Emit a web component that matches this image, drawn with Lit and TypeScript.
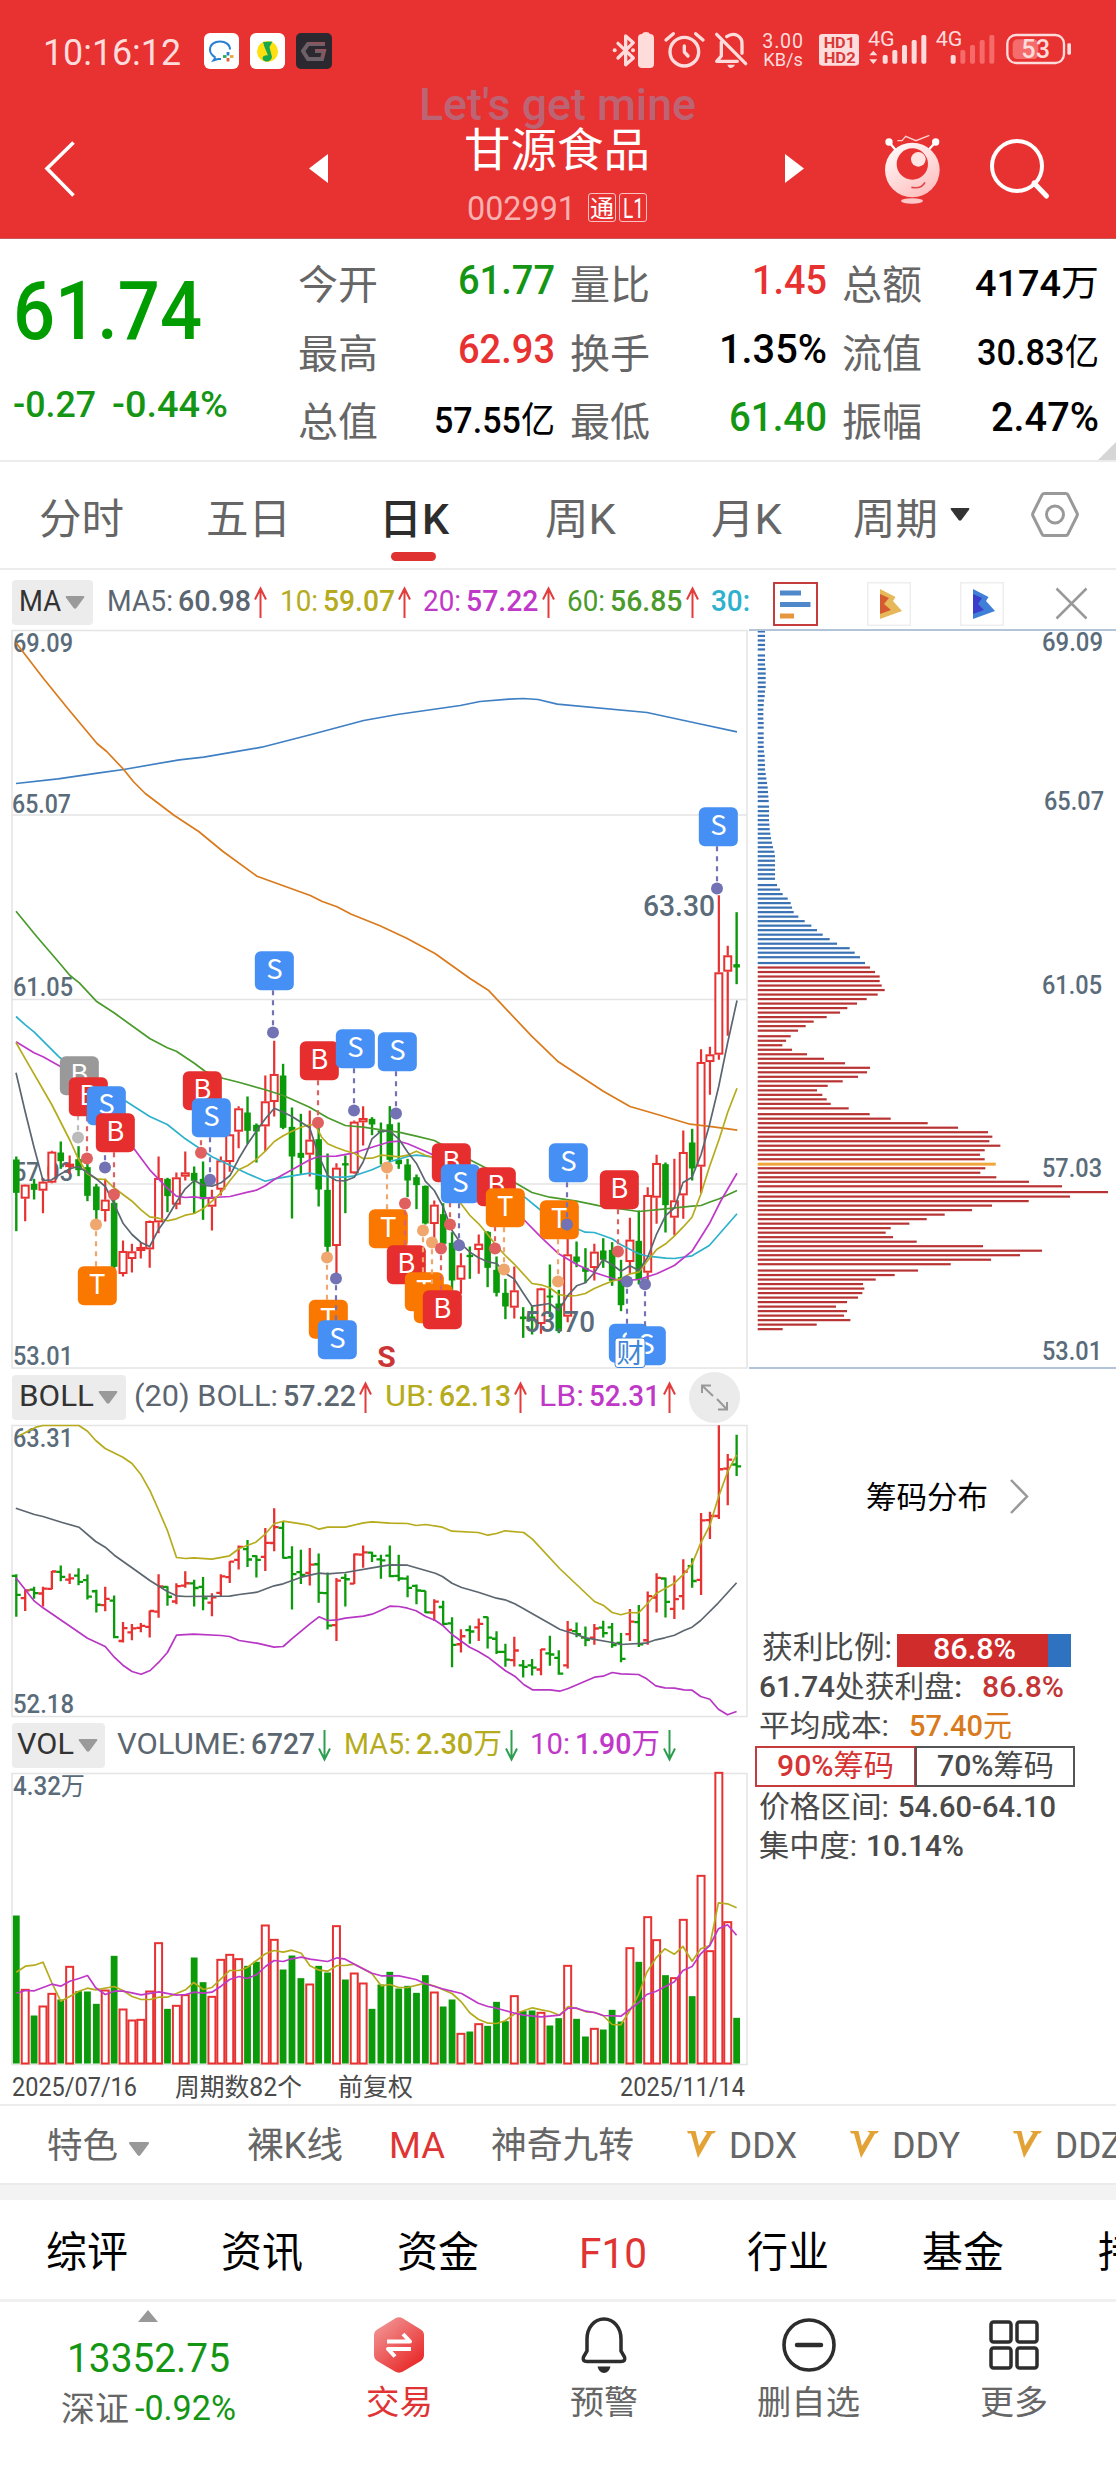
import { LitElement, html, svg, css } from "lit";
import { customElement } from "lit/decorators.js";

const UP = "#e83131";
const DOWN = "#0a9a0a";

/* Chart geometry: one slot per trading day, vertical unit is a third of a pixel from BASE_Y. */
const BASE_Y = 960;
const slot = (i: number) => 16.3 + 8.893 * i;
const py = (v: number) => BASE_Y + v / 3;

/* direction, high, body top, body bottom, low */
const DAYS: [string, number, number, number, number][] = [
  ["g",588,597,697,812],["r",672,673,714,782],["g",655,670,688,717],["r",655,664,690,758],["r",571,574,666,668],
  ["g",543,576,602,625],["r",585,610,617,640],["g",557,596,629,647],["g",590,620,706,722],["g",670,678,749,790],
  ["r",655,718,751,783],["g",700,727,919,925],["r",840,872,940,948],["r",850,873,895,936],["r",845,860,871,894],
  ["r",780,782,866,922],["r",588,653,785,818],["g",652,655,707,755],["r",636,651,732,746],["r",573,636,648,660],
  ["g",618,637,661,758],["g",603,655,716,778],["r",688,710,738,810],["r",588,600,687,705],["r",520,522,604,634],
  ["r",437,444,513,563],["g",408,456,511,550],["g",489,493,513,606],["r",345,423,497,572],["r",241,341,424,468],
  ["g",310,345,502,506],["g",441,499,588,774],["g",460,577,592,640],["r",450,538,582,648],["g",480,536,687,738],
  ["g",579,688,859,880],["r",608,622,856,940],["g",585,608,615,758],["r",480,484,638,640],["r",437,473,485,555],
  ["g",470,475,492,524],["g",486,510,516,612],["g",437,491,598,605],["g",486,597,611,625],["g",595,612,660,710],
  ["g",642,650,674,746],["g",675,676,789,792],["r",720,733,790,835],["g",728,761,850,860],["g",815,847,960,1078],
  ["r",878,915,957,1000],["g",858,883,890,955],["r",822,850,868,940],["g",812,814,922,980],["g",888,928,997,1008],
  ["g",955,997,1038,1076],["r",918,990,1041,1074],["g",1040,1068,1076,1132],["g",1035,1068,1080,1122],["r",982,984,1090,1120],
  ["g",912,1005,1011,1070],["g",988,1029,1112,1118],["r",835,882,1068,1085],["g",843,888,904,920],["g",863,922,934,968],
  ["r",850,874,922,960],["g",833,870,898,922],["g",845,868,961,976],["g",898,950,1034,1052],["r",772,838,904,940],
  ["g",750,841,957,972],["r",680,704,936,960],["r",583,608,711,790],["g",606,611,734,816],["r",595,720,771,824],
  ["r",510,575,704,775],["g",505,546,624,660],["r",266,305,618,698],["r",259,282,304,403],["r",-196,36,282,298],
  ["r",-44,-15,33,226],["g",-145,11,21,71],
];

const VOLUME = [615,838,915,888,850,867,769,842,843,880,840,736,897,930,928,843,698,895,886,854,741,815,859,748,733,746,766,754,645,688,777,735,803,822,766,786,647,807,789,819,895,822,784,834,826,847,794,846,888,867,970,963,941,946,874,932,857,902,900,907,945,923,766,925,978,955,957,898,933,713,754,620,689,794,803,628,857,496,722,187,635,922];

const MA_LINES: [string, number[]][] = [
  ["#3f7fc4",[48,-531,174,-545,298,-563,371,-573,538,-602,611,-610,785,-640,931,-677,1091,-720,1192,-738,1381,-765,1440,-777,1527,-784,1570,-786,1614,-783,1672,-769,1941,-744,2094,-711,2211,-686]],
  ["#d97a1c",[48,-953,131,-845,204,-755,291,-651,320,-627,371,-573,400,-537,436,-501,523,-435,596,-387,669,-327,771,-253,931,-195,967,-177,1011,-161,1054,-139,1140,-104,1220,-67,1305,-21,1410,54,1465,89,1595,227,1675,304,1810,392,1890,438,1970,461,2070,491,2140,499,2212,509]],
  ["#4a9a2c",[48,-148,112,-70,172,0,210,45,238,67,289,122,342,157,449,234,502,262,529,272,583,308,615,332,668,353,716,365,796,388,850,405,929,440,983,472,1036,495,1090,500,1143,508,1196,515,1249,527,1303,540,1418,602,1548,668,1596,696,1649,710,1730,722,1803,737,1916,753,1997,745,2076,737,2103,735,2128,725,2158,715,2211,690]],
  ["#2db1cc",[48,168,76,193,102,214,180,292,260,345,380,424,449,468,502,492,556,535,636,589,690,614,743,640,796,662,823,655,876,646,929,638,983,649,1036,650,1063,646,1116,628,1170,604,1223,588,1249,584,1303,590,1440,640,1574,710,1623,750,1738,808,1756,815,1783,816,1809,825,1836,835,1863,853,1916,880,1943,887,1997,893,2023,894,2076,886,2128,855,2211,760]],
  ["#c038c8",[48,244,102,277,129,289,180,317,260,370,350,490,400,562,449,628,502,683,529,707,556,711,583,709,609,713,690,708,743,695,769,689,796,676,823,657,876,628,929,598,956,588,1009,587,1063,577,1116,560,1170,544,1196,542,1223,550,1276,572,1303,585,1440,680,1574,780,1623,830,1676,880,1730,912,1783,936,1836,953,1863,961,1916,957,1970,940,2023,915,2076,872,2128,790,2163,720,2211,638]],
  ["#b5ab1c",[48,246,76,295,155,432,210,540,235,595,262,640,289,655,316,657,342,682,396,722,423,748,449,769,476,773,502,781,529,775,556,764,583,759,609,745,636,722,663,697,690,660,716,628,743,615,769,597,796,572,823,543,850,526,876,512,903,500,929,493,945,492,965,530,983,550,1009,561,1036,571,1063,578,1089,594,1116,593,1143,584,1170,586,1196,589,1223,584,1249,572,1276,584,1303,592,1350,680,1383,730,1410,765,1436,790,1463,822,1490,857,1516,885,1542,910,1596,969,1623,973,1649,982,1676,1002,1703,1007,1730,1005,1756,999,1783,984,1809,973,1836,962,1863,955,1890,940,1916,935,1943,900,1970,867,1997,850,2023,827,2049,800,2076,770,2103,700,2128,620,2158,535,2183,455,2211,383]],
  ["#5c6670",[48,337,76,455,102,560,129,660,155,658,183,640,210,625,235,618,262,636,289,655,316,678,342,730,369,788,396,822,423,846,449,858,476,806,502,770,529,725,556,685,583,660,609,674,636,677,663,667,690,645,716,595,743,550,769,512,796,475,823,443,850,455,876,468,903,485,929,502,956,585,983,645,1009,660,1036,661,1063,650,1089,605,1116,535,1143,512,1169,512,1196,535,1223,575,1249,608,1276,662,1303,690,1329,738,1356,810,1383,850,1410,875,1436,892,1463,904,1490,909,1516,938,1542,955,1569,997,1596,1037,1623,1033,1649,1029,1676,1050,1703,1005,1730,976,1756,967,1783,937,1809,897,1836,912,1863,932,1890,916,1916,930,1943,890,1970,820,1997,765,2023,743,2049,666,2076,650,2103,583,2128,495,2156,378,2183,246,2211,120]],
];

const BOLL_LINES: [string, number[]][] = [
  ["#b5ab1c",[40,226,75,200,90,195,165,195,183,212,200,240,220,264,257,290,276,309,295,343,314,392,332,450,350,510,369,591,388,594,405,592,443,596,480,586,500,564,535,545,555,520,573,490,592,482,630,490,648,495,667,506,685,500,722,500,760,487,778,484,815,488,852,489,870,495,890,492,925,500,945,512,1000,516,1020,524,1038,519,1056,511,1095,516,1113,536,1170,624,1243,723,1261,734,1280,756,1298,763,1316,756,1335,757,1352,732,1371,700,1410,668,1430,640,1447,610,1465,548,1484,495,1502,410,1521,335,1540,283]],
  ["#5c6670",[33,443,72,462,90,468,130,486,165,500,200,543,220,560,239,584,276,622,314,661,350,693,369,706,388,708,480,707,500,702,537,695,573,676,592,670,630,650,667,638,685,640,722,636,778,622,815,613,852,614,870,622,910,638,925,648,945,668,965,681,1000,695,1038,713,1056,718,1076,730,1095,745,1113,760,1150,790,1170,806,1225,832,1280,846,1298,852,1350,848,1371,838,1390,832,1410,824,1430,810,1447,800,1465,780,1502,727,1540,667]],
  ["#b836c4",[33,652,72,722,90,742,183,833,220,858,239,890,257,914,276,933,295,941,314,930,332,905,350,876,369,824,405,821,462,825,480,828,500,840,537,848,573,860,592,858,610,835,648,790,667,769,685,780,705,778,722,773,760,767,778,761,797,749,815,737,834,738,852,743,870,751,890,768,910,780,925,794,945,822,982,860,1000,873,1020,890,1056,930,1076,947,1095,972,1113,988,1150,988,1170,992,1188,984,1243,950,1261,947,1280,936,1298,940,1335,942,1352,955,1371,976,1390,982,1410,983,1430,988,1447,989,1465,1008,1484,1016,1502,1046,1521,1063,1540,1053]],
];

const VOL_LINES: [string, number[]][] = [
  ["#b5ab1c",[34,785,53,767,72,764,90,755,108,816,127,872,146,858,165,842,183,833,200,838,239,828,257,840,276,858,295,867,314,867,332,860,350,860,388,838,405,816,425,837,443,831,462,805,480,780,500,780,517,771,537,749,555,730,573,720,592,725,610,719,630,728,648,766,667,779,685,782,705,765,722,765,741,761,778,790,797,826,815,822,834,831,852,831,889,818,910,827,925,837,945,849,965,875,982,907,1000,926,1020,938,1038,939,1056,931,1076,910,1113,892,1132,898,1150,903,1170,914,1188,888,1206,894,1225,904,1243,906,1261,915,1280,942,1298,943,1316,902,1335,853,1352,786,1371,743,1390,715,1410,731,1428,708,1447,752,1465,715,1484,705,1502,577,1521,580,1540,592]],
  ["#c038c8",[34,848,53,840,72,841,108,821,127,827,146,812,165,804,183,795,200,832,220,852,239,842,257,842,276,847,295,853,332,844,369,854,388,852,405,845,425,848,443,845,462,827,480,807,500,798,517,804,537,792,555,768,573,750,592,753,610,745,630,740,648,746,685,753,705,742,722,746,741,761,778,788,797,796,834,796,870,807,889,820,925,835,965,849,1000,878,1020,888,1038,893,1076,908,1095,914,1132,919,1170,914,1188,893,1206,893,1225,902,1243,906,1261,915,1298,917,1335,877,1352,852,1371,843,1410,814,1428,780,1447,768,1465,730,1484,705,1502,655,1521,643,1540,674]],
];

/* kind, badge centre x/y, anchor dot x/y */
const MARKS: [string, number, number, number, number][] = [
  ["N",238,346,234,531],["B",265,409,261,594],["S",319,436,315,621],["B",346,517,342,702],["T",292,976,288,792],
  ["B",607,391,603,577],["S",634,472,630,658],["S",823,31,819,216],["B",958,301,954,487],["T",985,1076,981,891],
  ["S",1012,1138,1008,954],["S",1066,265,1062,450],["T",1165,805,1161,621],["S",1192,274,1188,459],["B",1219,913,1215,729],
  ["T",1273,994,1269,810],["T",1300,1030,1296,846],["B",1327,1048,1323,864],["B",1354,607,1350,792],["S",1381,670,1377,854],
  ["B",1489,679,1485,864],["T",1516,742,1512,927],["T",1678,778,1674,963],["S",1705,607,1701,792],["B",1858,688,1854,873],
  ["S",1885,1148,1881,963],["S",1939,1156,1935,971],["S",2155,-401,2151,-216],
];
const MARK_FILL: Record<string, string> = { N: "#999999", B: "#e62e2e", S: "#4690f5", T: "#fa7800" };
const MARK_DOT: Record<string, string> = { N: "#bbbbbb", B: "#e06060", S: "#7272b4", T: "#f0a76e" };

const CHIPS: [number, number[]][] = [
  [127,[75,75,75,75,75]],
  [173,[75,75,75,77,77,77,77,77,75,74,72,71,70,70,70,71,71]],
  [322,[71,71,71,71,72,74,74,75,75,77,79,81,83,84,85,86]],
  [462,[87,87,87,87,88,89,91,93,96,99,103,105,105,105,105,105,105]],
  [612,[111,120,128,143,152,156,161,175,194,214,231,248,269,291,329,344,360]],
  [761,[375,390,405,419,419,425,434,413,380,351,322,300,260,221,197,174]],
  [901,[152,138,127,156,201,252,315,390,381,354,308,263,231,247,260,272,326]],
  [1050,[389,452,563,654,744,757,748,781,734,720,734,767,736,721,769,867,966]],
  [1199,[1104,990,866,756,696,614,560,508,452,437,459,530,729,906,840,753,632]],
  [1349,[534,464,407,369,373,367,354,321,288,321,312,331,230,128]],
];

const points = (a: number[], kx: number, ky: number, oy: number) => {
  let s = "";
  for (let i = 0; i < a.length; i += 2) s += `${(a[i] * kx).toFixed(1)},${(oy + a[i + 1] * ky).toFixed(1)} `;
  return s;
};
const lines = (set: [string, number[]][], kx: number, ky: number, oy: number) =>
  set.map(([c, a]) => svg`<polyline points=${points(a, kx, ky, oy)} fill="none" stroke=${c} stroke-width="1.700" stroke-linejoin="round"/>`);

/* Text drawn at a fixed advance width; Han runs keep the regular weight. */
const runs = (text: string) =>
  text.split(/([\u4e00-\u9fff]+)/).filter((t) => t).map((t) => (/[\u4e00-\u9fff]/.test(t) ? svg`<tspan class="han">${t}</tspan>` : svg`<tspan>${t}</tspan>`));
const lab = (text: string, w: number, size: number, cls = "") => html`
  <svg class="lab ${cls}" width=${w} height=${size}><text x="0" y=${size * 0.87} font-size=${size} textLength=${w} lengthAdjust="spacingAndGlyphs">${runs(text)}</text></svg>`;
const tx = (text: string, x: number, y: number, w: number, size: number) =>
  svg`<text class="axis" x=${x} y=${y} font-size=${size} textLength=${w} lengthAdjust="spacingAndGlyphs">${runs(text)}</text>`;

const arrow = (up: boolean) => html`<svg class="arr ${up ? "" : "dn"}" width="13" height="31" viewBox="0 0 13 31">
  <path d="M6.5 31V2M1 12.5L6.5 1.5L12 12.5" fill="none" stroke=${up ? "#e23c3c" : "#2e9e50"} stroke-width="2"/></svg>`;
const caret = (c = "#9a9a9a", w = 20, h = 13) => html`<svg class="caret" width=${w} height=${h} viewBox="0 0 20 13"><path d="M1.5 0H18.5Q20 0 19 1.8L11.4 12Q10 13.6 8.6 12L1 1.8Q0 0 1.5 0Z" fill=${c}/></svg>`;

const base = css`
  :host, * { box-sizing: border-box; }
  svg { display: block; flex: none; overflow: visible; }
  text { font-family: Roboto, "Noto Sans CJK SC", sans-serif; fill: currentColor; }
  .row { display: flex; align-items: center; }
  .m text { font-weight: 500; }
  .han { font-weight: 400; }
  .red { color: #e03434; }
  .green { color: #149614; }
`;

@customElement("app-header")
class AppHeader extends LitElement {
  static styles = [base, css`
    :host { display: block; position: relative; height: 239px; background: #e83131; border-bottom: 1px solid #c45a5a; }
    .status { height: 82px; padding: 20px 0 0 43px; color: #ffdcdc; }
    .apps { display: flex; gap: 11px; margin-left: 23px; }
    .sys { margin-left: auto; }
    .bar { height: 156px; color: #fff; }
    .bar > svg { margin-top: 17px; }
    .back { margin-left: 45px; }
    .prev { margin-left: 234px; }
    .title { display: flex; flex-direction: column; align-items: center; width: 188px; margin: 0 134px 0 135px; padding-top: 30px; gap: 19px; }
    .code { gap: 3px; color: #fff; }
    .code .num { color: #f9b0b0; margin-right: 9px; }
    .tag { display: flex; align-items: center; justify-content: center; width: 28px; height: 29px; border: 1.5px solid #fbc0c0; border-radius: 3px; }
    .bot { margin-left: 80px; }
    .find { margin-left: 50px; }
    .mark { position: absolute; left: 419px; top: 81px; color: #bd6474; }
    .hd { fill: #d93838; }
  `];
  render() {
    const bars = (x: number, dim: boolean) => [0, 1, 2, 3, 4].map((i) =>
      svg`<rect x=${x + 29 * i} y=${105 - 15 * i} width="15" height=${26 + 15 * i} rx="5" fill=${dim && i ? "#f66a6a" : "#ffdcdc"}/>`);
    return html`
      <div class="row status">
        ${lab("10:16:12", 138, 37)}
        <div class="apps">
          <svg width="35" height="36" viewBox="0 0 35 36"><rect width="35" height="36" rx="6" fill="#fff"/><path d="M11.500 24.500C8 22.500 6 19.500 6 16.500C6 11.500 10.500 8.500 16 8.500C21.500 8.500 26 11.500 26 16.500M11.500 24.500L9.500 27.500L14 26H17" fill="none" stroke="#2a7fd0" stroke-width="2"/><path d="M24 19v3.500" stroke="#2a7fd0" stroke-width="2.800"/><path d="M26 23.500h3.500" stroke="#e6a63c" stroke-width="2.800"/><path d="M24 25v3.500" stroke="#e0603c" stroke-width="2.800"/><path d="M19 23.500h3.500" stroke="#2bab5c" stroke-width="2.800"/></svg>
          <svg width="35" height="36" viewBox="0 0 35 36"><rect width="35" height="36" rx="6" fill="#fff"/><circle cx="17.500" cy="18.500" r="10.500" fill="#ffdf10"/><path d="M13 9L22.500 8.500L19.500 14L22 24C21.500 27.500 18 29.500 14.500 28C11 26 12.500 21.500 18 22.500L14.500 14Z" fill="#15a850"/></svg>
          <svg width="36" height="36" viewBox="0 0 36 36"><rect width="36" height="36" rx="5" fill="#2c2830"/><path d="M29 11H12L7 18L12 26H26L28 18H19" fill="none" stroke="#6d6068" stroke-width="4"/><path d="M29 10H13M19 17H29L27 25" fill="none" stroke="#b04a50" stroke-width="1.200"/></svg>
        </div>
        <svg class="sys" width="516" height="62" viewBox="0 0 1548 186">
          <g fill="none" stroke="#ffdcdc" stroke-width="10" stroke-linecap="round" stroke-linejoin="round">
            <path d="M54 70L100 114L77 134V48L100 68L54 114"/>
            <circle cx="253" cy="95" r="43"/><path d="M253 78V96L264 108M198 60L220 41M309 60L287 41"/>
            <path d="M350 43L437 131M364 66V108L350 124H412M380 50C404 34 428 50 426 74V100"/>
            <rect x="1222" y="45" width="170" height="84" rx="26" stroke-width="7"/>
          </g>
          <g fill="#ffdcdc">
            <circle cx="44" cy="91" r="6"/><circle cx="99" cy="91" r="6"/>
            <path d="M126 42Q128 36 138 36Q148 36 150 42Q162 42 162 54V132Q162 144 150 144H126Q114 144 114 132V54Q114 42 126 42Z"/>
            <path d="M382 134H405Q400 144 393 144Q386 144 382 134Z"/>
            <rect x="657" y="42" width="120" height="95" rx="10"/>
            <path d="M820 92L832 106H808ZM820 132L832 118H808Z"/>
            <rect x="1402" y="70" width="11" height="34" rx="4"/>
            <text x="487" y="85" font-size="59" textLength="122">3.00</text>
            <text x="490" y="137" font-size="53" textLength="119" lengthAdjust="spacingAndGlyphs">KB/s</text>
            <text x="804" y="79" font-size="60" textLength="80" lengthAdjust="spacingAndGlyphs">4G</text>
            <text x="1007" y="79" font-size="60" textLength="80" lengthAdjust="spacingAndGlyphs">4G</text>
          </g>
          <g font-weight="700"><text class="hd" x="671" y="85" font-size="44" textLength="94" lengthAdjust="spacingAndGlyphs">HD1</text><text class="hd" x="671" y="128" font-size="44" textLength="96" lengthAdjust="spacingAndGlyphs">HD2</text></g>
          ${bars(848, false)}${bars(1052, true)}
          <rect x="1238" y="58" width="77" height="59" rx="14" fill="#f56c6c"/>
          <text x="1264" y="114" font-size="76" font-weight="500" textLength="86" lengthAdjust="spacingAndGlyphs">53</text>
        </svg>
      </div>
      <div class="row bar">
        <svg class="back" width="30" height="56" viewBox="0 0 30 56"><path d="M28.500 1.500L2 27.500L28.500 54.500" fill="none" stroke="#fff" stroke-width="3.600"/></svg>
        <svg class="prev" width="19" height="29" viewBox="0 0 19 29"><path d="M0 14.500L19 0V29Z" fill="#fff"/></svg>
        <div class="title">
          ${lab("甘源食品", 186, 46)}
          <div class="row code"><div class="num">${lab("002991", 109, 33)}</div><span class="tag">${lab("通", 24, 24)}</span><span class="tag">${lab("L1", 21, 28)}</span></div>
        </div>
        <svg class="next" width="19" height="29" viewBox="0 0 19 29"><path d="M19 14.500L0 0V29Z" fill="#fff"/></svg>
        <svg class="bot" width="56" height="70" viewBox="850 340 168 210">
          <defs><linearGradient id="h" x1="0" y1="0" x2=".6" y2="1"><stop offset="0" stop-color="#fff"/><stop offset="1" stop-color="#ffc2c2"/></linearGradient></defs>
          <path d="M865 364L890 394M1005 364L978 394" stroke="#fff" stroke-width="7"/><circle cx="865" cy="364" r="11" fill="#fff"/><circle cx="1005" cy="364" r="11" fill="#fff"/>
          <path d="M890 360H904L915 347L946 360L986 344" fill="none" stroke="#ffd0d0" stroke-width="4"/>
          <circle cx="935" cy="448" r="82" fill="url(#h)"/><circle cx="935" cy="430" r="47" fill="#e83131"/><circle cx="953" cy="416" r="22" fill="#ffe4e4"/>
          <path d="M932 500Q962 506 973 485" fill="none" stroke="#e04848" stroke-width="5"/><ellipse cx="934" cy="541" rx="33" ry="8" fill="#ffc8c8"/>
        </svg>
        <svg class="find" width="60" height="60" viewBox="0 0 60 60"><circle cx="27" cy="27" r="25" fill="none" stroke="#fff" stroke-width="4"/><path d="M44 44L56.500 57" stroke="#fff" stroke-width="5" stroke-linecap="round"/></svg>
      </div>
      <div class="mark">${lab("Let's get mine", 277, 45, "m")}</div>`;
  }
}

@customElement("quote-board")
class QuoteBoard extends LitElement {
  static styles = [base, css`
    :host { display: flex; position: relative; height: 223px; border-bottom: 2px solid #ececec; background: #fff; }
    .price { width: 298px; padding: 30px 0 0 13px; color: #009c00; }
    .chg { gap: 16px; margin-top: 35px; color: #149614; }
    .grid { display: grid; grid-template-columns: repeat(3, 257px); column-gap: 15px; grid-auto-rows: 68.500px; padding-top: 11px; }
    .cell { display: flex; align-items: center; justify-content: space-between; color: #666; }
    .k { color: #000; margin-bottom: 10px; }
    .c { color: #000; margin-bottom: 2px; }
    .up { color: #e83131; }
    .down { color: #149614; }
    .fold { position: absolute; right: 0; bottom: 0; }
  `];
  cells: [string, string, number, string][] = [
    ["今开", "61.77", 97, "k down"], ["量比", "1.45", 75, "k up"], ["总额", "4174万", 124, "c"],
    ["最高", "62.93", 97, "k up"], ["换手", "1.35%", 108, "k"], ["流值", "30.83亿", 122, "c"],
    ["总值", "57.55亿", 121, "c"], ["最低", "61.40", 98, "k down"], ["振幅", "2.47%", 108, "k"],
  ];
  render() {
    return html`
      <div class="price">${lab("61.74", 189, 81, "m")}<div class="row chg">${lab("-0.27", 83, 37, "m")}${lab("-0.44%", 116, 37, "m")}</div></div>
      <div class="grid">${this.cells.map(([n, v, w, c]) => html`<div class="cell">${lab(n, 80, 40)}<span class=${c}>${lab(v, w, c === "c" ? 36 : 40, "m")}</span></div>`)}</div>
      <svg class="fold" width="18" height="18" viewBox="0 0 18 18"><path d="M18 0V18H0Z" fill="#d6d6d6"/></svg>`;
  }
}

@customElement("period-tabs")
class PeriodTabs extends LitElement {
  static styles = [base, css`
    :host { display: flex; align-items: center; height: 108px; padding: 6px 0 0 39px; border-bottom: 2px solid #ececec; color: #666; }
    .t1 { margin-left: 82px; } .t2 { margin-left: 88px; } .t3 { margin-left: 96px; } .t5 { margin-left: 95px; } .t4 { margin-left: 71px; }
    .on { position: relative; color: #2d2d2d; }
    .on .lab text { font-weight: 500; }
    .on .han { font-weight: 500; }
    .on::after { content: ""; position: absolute; left: 12px; top: 55px; width: 45px; height: 9px; border-radius: 5px; background: #e03131; }
    .caret { margin-left: 10px; margin-top: -8px; }
    .set { margin-left: 59px; margin-top: -7px; }
  `];
  render() {
    return html`
      <span>${lab("分时", 85, 42)}</span><span class="t1">${lab("五日", 85, 42)}</span><span class="t2 on">${lab("日K", 70, 42)}</span>
      <span class="t3">${lab("周K", 71, 42)}</span><span class="t5">${lab("月K", 71, 42)}</span><span class="t4">${lab("周期", 85, 42)}</span>
      ${caret("#333", 24, 13)}
      <svg class="set" width="48" height="45" viewBox="0 0 48 45"><path d="M13 1.500H35Q36.500 1.500 37 3L46 21Q46.800 22.500 46 24L37 42Q36.500 43.500 35 43.500H13Q11.500 43.500 11 42L2 24Q1.200 22.500 2 21L11 3Q11.500 1.500 13 1.500Z" fill="none" stroke="#999" stroke-width="3"/><circle cx="24" cy="22.500" r="8.500" fill="none" stroke="#999" stroke-width="3"/></svg>`;
  }
}

@customElement("stock-charts")
class StockCharts extends LitElement {
  static styles = [base, css`
    :host { display: block; width: 750px; }
    .ind { display: flex; align-items: center; height: 56px; padding-left: 12px; }
    .ind.first { height: 60px; padding-top: 4px; }
    .chip { display: flex; align-items: center; gap: 4px; height: 45px; padding: 0 8px 0 7px; border-radius: 4px; background: #ececec; color: #333; margin-right: 14px; }
    .chip.b { margin-right: 8px; }
    .chip.v { margin-right: 12px; padding: 0 7px 0 5px; }
    .ind .lab { margin-bottom: 3px; }
    .arr { margin: 0 12.500px 0 3px; }
    .dn { transform: scaleY(-1); }
    .slate { color: #5c6670; } .olive { color: #b5ab1c; } .violet { color: #c038c8; } .leaf { color: #4a9a2c; } .cyan { color: #2db1cc; }
    .axis { fill: #5a6b7a; font-weight: 500; }
    .badge { font-family: "Noto Sans CJK SC", sans-serif; fill: #fff; }
    .sell { fill: #cc3535; font-weight: 700; }
    .cai { fill: #3f86d8; }
    .foot { display: flex; align-items: center; height: 40px; padding: 3px 5px 0 12px; color: #4a4a4a; }
    .foot .n { margin-left: 38px; } .foot .q { margin-left: 36px; } .foot .e { margin-left: auto; }
    .duo { display: flex; align-items: center; }
    .duo .gap { width: 5px; }
  `];
  /* Name with the thin face, figure with the heavier one. */
  pair(name: string, nw: number, value: string, vw: number, cls: string) {
    return html`<span class="duo ${cls}">${lab(name, nw, 29)}<i class="gap"></i>${lab(value, vw, 29, "m")}</span>`;
  }
  price() {
    return svg`
      <g stroke="#e4e4e4" stroke-width="1.500" fill="none"><rect x="12" y="630" width="735" height="737.500"/><path d="M12 814.500H747M12 999H747M12 1183.500H747"/></g>
      ${tx("69.09", 13, 651, 60, 25.5)}${tx("65.07", 12, 812, 59, 25.5)}${tx("61.05", 13, 995.5, 60, 25.5)}${tx("57.03", 13, 1180.5, 60, 25.5)}${tx("53.01", 13, 1364.5, 60, 25.5)}
      ${DAYS.map(([d, h, t, b, l], i) => {
        const x = slot(i), T = py(t), B = py(b);
        return d === "g"
          ? svg`<path d="M${x} ${py(h)}V${py(l)}" stroke=${DOWN} stroke-width="2.400"/><rect x=${x - 3.3} y=${T} width="6.600" height=${Math.max(2, B - T)} fill=${DOWN}/>`
          : svg`<path d="M${x} ${py(h)}V${T}M${x} ${B}V${py(l)}" stroke=${UP} stroke-width="2.200"/><rect x=${x - 3.5} y=${T + 0.8} width="7" height=${Math.max(1.5, B - T - 1.6)} fill="#fff" stroke=${UP} stroke-width="2"/>`;
      })}
      ${lines(MA_LINES, 1 / 3, 1 / 3, BASE_Y)}
      ${tx("63.30", 643, 915, 72, 29.5)}${tx("53.70", 524, 1331.5, 71, 29.5)}
      ${MARKS.map(([k, bx, by, dx, dy]) => {
        const X = bx / 3, Y = py(by), edge = Y + (by < dy ? 19.5 : -19.5);
        return svg`<path d="M${dx / 3} ${edge}V${py(dy)}" stroke=${MARK_DOT[k]} stroke-width="2.200" stroke-dasharray="5 5"/>
          <rect x=${X - 19.5} y=${Y - 19.5} width="39" height="39" rx="6" fill=${MARK_FILL[k]}/>
          <text class="badge" x=${X} y=${Y + 8.5} font-size="27.500" text-anchor="middle">${k === "N" ? "B" : k}</text>
          <circle cx=${dx / 3} cy=${py(dy)} r="6" fill=${MARK_DOT[k]}/>`;
      })}
      <text class="sell" x="386.500" y="1366.500" font-size="30" text-anchor="middle">S</text>
      <rect x="615" y="1337.500" width="30" height="29.500" rx="3" fill="#fff" stroke="#3f86d8" stroke-width="1"/>
      <text class="cai" x="630" y="1362" font-size="27" text-anchor="middle">财</text>`;
  }
  boll() {
    const by = (v: number) => 1425 + (63.31 - (53.01 + (1367.7 - py(v)) * 0.0218)) * 26.146;
    return svg`
      <rect x="12" y="1425" width="735" height="291" fill="none" stroke="#e4e4e4" stroke-width="1.500"/>
      ${tx("63.31", 13, 1446, 60, 25.5)}${tx("52.18", 13, 1712, 61, 25.5)}
      ${DAYS.map(([d, h, t, b, l], i) => {
        const x = slot(i), o = by(d === "g" ? t : b), c = by(d === "g" ? b : t);
        return svg`<path d="M${x} ${by(h)}V${by(l)}M${x - 4.5} ${o}H${x}M${x} ${c}H${x + 4.5}" stroke=${d === "g" ? DOWN : UP} stroke-width="2.300"/>`;
      })}
      ${lines(BOLL_LINES, 1 / 2.0907, 1 / 3, 1360)}`;
  }
  vol() {
    return svg`
      <rect x="12" y="1773" width="735" height="291" fill="none" stroke="#e4e4e4" stroke-width="1.500"/>
      ${tx("4.32万", 13, 1794.5, 72, 25.5)}
      ${VOLUME.map((v, i) => {
        const x = slot(i), y = 1710 + v / 3, h = 2063 - y;
        return DAYS[i][0] === "g"
          ? svg`<rect x=${x - 3.4} y=${y} width="6.800" height=${h} fill=${DOWN}/>`
          : svg`<rect x=${x - 3.5} y=${y} width="7" height=${h} fill="#fff" stroke=${UP} stroke-width="2"/>`;
      })}
      ${lines(VOL_LINES, 1 / 2.0907, 1 / 3, 1710)}`;
  }
  render() {
    return html`
      <div class="ind first">
        <span class="chip">${lab("MA", 42, 29)}${caret()}</span>
        ${this.pair("MA5:", 66, "60.98", 73, "slate")}${arrow(true)}${this.pair("10:", 38, "59.07", 72, "olive")}${arrow(true)}${this.pair("20:", 38, "57.22", 72.5, "violet")}${arrow(true)}${this.pair("60:", 38, "56.85", 72.5, "leaf")}${arrow(true)}${lab("30:", 39, 29, "m cyan")}
      </div>
      <svg width="750" height="739" viewBox="0 629.500 750 739">${this.price()}</svg>
      <div class="ind">
        <span class="chip b">${lab("BOLL", 75, 29)}${caret()}</span>
        ${this.pair("(20) BOLL:", 144, "57.22", 73, "slate")}${arrow(true)}${this.pair("UB:", 49, "62.13", 72, "olive")}${arrow(true)}${this.pair("LB:", 45, "52.31", 71, "violet")}${arrow(true)}
        <svg width="51" height="51" viewBox="0 0 51 51"><circle cx="25.500" cy="25.500" r="25.500" fill="#ebebeb"/><path d="M24 24L13 13.500M13 21V13.500H22M28 27L38 37.500M38 30V37.500H29" fill="none" stroke="#999" stroke-width="2"/></svg>
      </div>
      <svg width="750" height="292" viewBox="0 1424.500 750 292">${this.boll()}</svg>
      <div class="ind">
        <span class="chip v">${lab("VOL", 57, 29)}${caret()}</span>
        ${this.pair("VOLUME:", 129, "6727", 64, "slate")}${arrow(false)}${this.pair("MA5:", 67, "2.30万", 86, "olive")}${arrow(false)}${this.pair("10:", 40, "1.90万", 85, "violet")}${arrow(false)}
      </div>
      <svg width="750" height="292" viewBox="0 1772.500 750 292">${this.vol()}</svg>
      <div class="foot">${lab("2025/07/16", 125, 25.5)}<span class="n">${lab("周期数82个", 127, 25)}</span><span class="q">${lab("前复权", 75, 25)}</span><span class="e">${lab("2025/11/14", 125, 25.5)}</span></div>`;
  }
}

@customElement("chip-panel")
class ChipPanel extends LitElement {
  static styles = [base, css`
    :host { display: block; width: 366px; color: #4a4a4a; }
    .modes { height: 59px; padding: 8px 0 0 22.500px; display: flex; align-items: center; }
    .m2 { margin-left: 49px; } .m3 { margin-left: 49.500px; } .x { margin-left: 52px; }
    .axis { fill: #5a6b7a; font-weight: 500; }
    .link { gap: 22px; margin: 110px 0 0 116px; color: #000; }
    .info { margin-top: 113px; padding-left: 9px; }
    .line { display: flex; align-items: center; height: 39px; }
    .ratio { height: 39px; padding-left: 3px; gap: 5px; }
    .meter { position: relative; display: flex; width: 174px; height: 33px; margin-top: 7px; background: #2f72c0; color: #fff; }
    .fill { width: 151px; background: #d02c2c; }
    .pct { position: absolute; left: 36px; top: -1px; }
    .v { margin-left: 20px; } .w { margin-left: 9px; }
    .cost { color: #d97a1c; } .gain { color: #c43535; }
    .seg { display: flex; width: 320px; height: 41px; margin: 2px 0 -1px -4px; }
    .seg span { display: flex; align-items: center; justify-content: center; width: 160px; padding-bottom: 4px; border: 2px solid #555; color: #4a4a4a; }
    .seg .on { border-color: #c43c3c; color: #d63434; width: 161px; margin-right: -1px; }
  `];
  chips() {
    return CHIPS.map(([y0, ends]) => ends.map((e, i) => {
      const yy = y0 + 8.62 * i, top = 565 + yy / 1.912 - 1.1;
      const mean = y0 === 1050 && i === 11;
      return svg`<rect x="757.700" y=${top} width=${(e - 53) / 3} height=${mean ? 3 : 2.2} fill=${mean ? "#f0a63c" : yy < 765 ? "#3a72b4" : "#b83434"}/>`;
    }));
  }
  render() {
    return html`
      <div class="modes">
        <svg width="45" height="44" viewBox="0 0 45 44"><rect x="1" y="1" width="43" height="42" fill="#fff" stroke="#c43c3c" stroke-width="2"/><path d="M7 11H28M7 22.500H37.500" stroke="#5088cc" stroke-width="5"/><path d="M7 34H21" stroke="#e6963c" stroke-width="5"/></svg>
        <svg class="m2" width="44" height="44" viewBox="0 0 44 44"><rect x=".75" y=".75" width="42.500" height="42.500" fill="#fff" stroke="#eee" stroke-width="1.500"/><path d="M13 7L28.500 15L26 19L35 29L13 37Z" fill="#e6b85a"/><path d="M13 12L22 16L17 22L24 28L13 32Z" fill="#d65a30"/></svg>
        <svg class="m3" width="44" height="44" viewBox="0 0 44 44"><rect x=".75" y=".75" width="42.500" height="42.500" fill="#fff" stroke="#eee" stroke-width="1.500"/><path d="M13 7L28.500 15L26 19L35 29L13 37Z" fill="#3f7fd8"/><path d="M13 12L22 16L18 22L24 28L13 32Z" fill="#3c3ccc"/></svg>
        <svg class="x" width="31" height="31" viewBox="0 0 31 31"><path d="M.5.5L30.500 30.500M30.500.5L.5 30.500" stroke="#999" stroke-width="2.500"/></svg>
      </div>
      <svg width="366" height="740" viewBox="750 629 366 740">
        ${this.chips()}
        <path d="M749 630H1116M749 1368H1116" stroke="#b4c4d8" stroke-width="2"/>
        ${tx("69.09", 1042, 651, 61, 26)}${tx("65.07", 1044, 810, 60, 26)}${tx("61.05", 1042, 993.5, 60, 26)}${tx("57.03", 1042, 1176.5, 60, 26)}${tx("53.01", 1042, 1359.5, 60, 26)}
      </svg>
      <div class="row link">${lab("筹码分布", 122, 30.5)}<svg width="19" height="35" viewBox="0 0 19 35"><path d="M1 1L17 17.500L1 34" fill="none" stroke="#999" stroke-width="2.500"/></svg></div>
      <div class="info">
        <div class="line ratio">${lab("获利比例:", 130, 30.5)}<div class="meter"><div class="fill"></div><div class="pct">${lab("86.8%", 83, 30, "m")}</div></div></div>
        <div class="line">${lab("61.74处获利盘:", 203, 30, "m")}<span class="v gain">${lab("86.8%", 82, 30, "m")}</span></div>
        <div class="line">${lab("平均成本:", 130, 30)}<span class="v cost">${lab("57.40元", 103, 30, "m")}</span></div>
        <div class="seg"><span class="on">${lab("90%筹码", 117, 30, "m")}</span><span>${lab("70%筹码", 117, 30, "m")}</span></div>
        <div class="line">${lab("价格区间:", 130, 30)}<span class="w">${lab("54.60-64.10", 158, 30, "m")}</span></div>
        <div class="line">${lab("集中度:", 98, 30)}<span class="w">${lab("10.14%", 98, 30, "m")}</span></div>
      </div>`;
  }
}

@customElement("app-footer")
class AppFooter extends LitElement {
  static styles = [base, css`
    :host { display: block; }
    .tools { display: flex; align-items: center; height: 79px; padding-left: 47px; border-top: 2px solid #ececec; color: #666; overflow: hidden; }
    .tools .caret { margin: 8px 49px 0 10px; }
    .sep { width: 1px; height: 42px; background: #e6e6e6; margin-right: 48px; }
    .g { margin-left: 46px; } .v { margin-left: 53px; margin-right: 13px; }
    .band { height: 17px; background: #f3f3f3; border-top: 2px solid #ebebeb; }
    .cats { display: flex; align-items: center; height: 102px; padding: 5px 0 0 46px; border-bottom: 3px solid #f0f0f0; color: #000; overflow: hidden; }
    .cats span { flex: none; width: 175.300px; }
    .cats .f { padding-left: 7px; }
    .nav { display: flex; color: #666; }
    .idx { width: 297px; padding-top: 8px; display: flex; flex-direction: column; align-items: center; }
    .idx .n { margin: 15px 0 13px; color: #149614; }
    .idx .s { gap: 6px; }
    .it { display: flex; flex-direction: column; align-items: center; width: 205px; padding-top: 15px; gap: 12px; }
    .icon { height: 56px; display: flex; align-items: center; }
  `];
  vmark() {
    return html`<svg class="v" width="29" height="27" viewBox="0 0 29 27"><path d="M0 0H8.500L12 15L20 2L17 0H29L27 2.500H25L11 27L4 2.500H1Z" fill="#e3a236"/></svg>`;
  }
  render() {
    return html`
      <div class="tools">
        ${lab("特色", 71, 35.5)}${caret("#999", 22, 14)}<div class="sep"></div>
        ${lab("裸K线", 96, 36)}<span class="g red">${lab("MA", 56, 37)}</span><span class="g">${lab("神奇九转", 143, 36)}</span>
        ${this.vmark()}${lab("DDX", 68, 37)}${this.vmark()}${lab("DDY", 68, 37)}${this.vmark()}${lab("DDZ", 67, 37)}
      </div>
      <div class="band"></div>
      <div class="cats">${["综评", "资讯", "资金"].map((t) => html`<span>${lab(t, 82, 41.5)}</span>`)}<span class="red f">${lab("F10", 68, 42)}</span>${["行业", "基金", "持股"].map((t) => html`<span>${lab(t, 82, 41.5)}</span>`)}</div>
      <div class="nav">
        <div class="idx">
          <svg width="20" height="12" viewBox="0 0 20 12"><path d="M10 0L20 12H0Z" fill="#999"/></svg>
          <div class="n">${lab("13352.75", 163, 40)}</div>
          <div class="row s">${lab("深证", 68, 34)}<span class="green">${lab("-0.92%", 101, 35)}</span></div>
        </div>
        <div class="it red"><div class="icon"><svg width="50" height="56" viewBox="0 0 50 56">
          <defs><linearGradient id="x" x1="0" y1="0" x2=".8" y2="1"><stop offset="0" stop-color="#f3a0a0"/><stop offset="1" stop-color="#e82424"/></linearGradient></defs>
          <path d="M21 1.500Q25-.8 29 1.500L46 12Q50 14 50 18V38Q50 42 46 44.500L29 54.500Q25 56.800 21 54.500L4 44.500Q0 42 0 38V18Q0 14 4 12Z" fill="url(#x)"/>
          <path d="M13 24.500H36L29 17M37 32H14L21 39.500" fill="none" stroke="#fff" stroke-width="4" stroke-linejoin="round"/></svg></div>${lab("交易", 67, 33.5)}</div>
        <div class="it"><div class="icon"><svg width="46" height="56" viewBox="0 0 46 56"><path d="M23 2C13 2 6 11 6 22V34L2.500 40Q1 44.500 6 44.500H40Q45 44.500 43.500 40L40 34V22C40 11 33 2 23 2Z" fill="none" stroke="#2d2d2d" stroke-width="3.500"/><path d="M16.500 49.500H29.500Q28 56 23 56Q18 56 16.500 49.500Z" fill="#2d2d2d"/></svg></div>${lab("预警", 68, 33.5)}</div>
        <div class="it"><div class="icon"><svg width="54" height="54" viewBox="0 0 54 54"><circle cx="27" cy="27" r="25" fill="none" stroke="#2d2d2d" stroke-width="3.600"/><path d="M15 27H39" stroke="#2d2d2d" stroke-width="4.500" stroke-linecap="round"/></svg></div>${lab("删自选", 103, 33.5)}</div>
        <div class="it"><div class="icon"><svg width="50" height="50" viewBox="0 0 50 50"><g fill="none" stroke="#2d2d2d" stroke-width="3.500"><rect x="2" y="2" width="20" height="20" rx="2.500"/><rect x="28" y="2" width="20" height="20" rx="2.500"/><rect x="2" y="28" width="20" height="20" rx="2.500"/><rect x="28" y="28" width="20" height="20" rx="2.500"/></g></svg></div>${lab("更多", 68, 33.5)}</div>
      </div>`;
  }
}

@customElement("app-root")
class AppRoot extends LitElement {
  static styles = css`
    :host { display: block; width: 1116px; height: 2480px; background: #fff; overflow: hidden; }
    .body { display: flex; height: 1534px; }
  `;
  render() {
    return html`<app-header></app-header><quote-board></quote-board><period-tabs></period-tabs>
      <div class="body"><stock-charts></stock-charts><chip-panel></chip-panel></div>
      <app-footer></app-footer>`;
  }
}
